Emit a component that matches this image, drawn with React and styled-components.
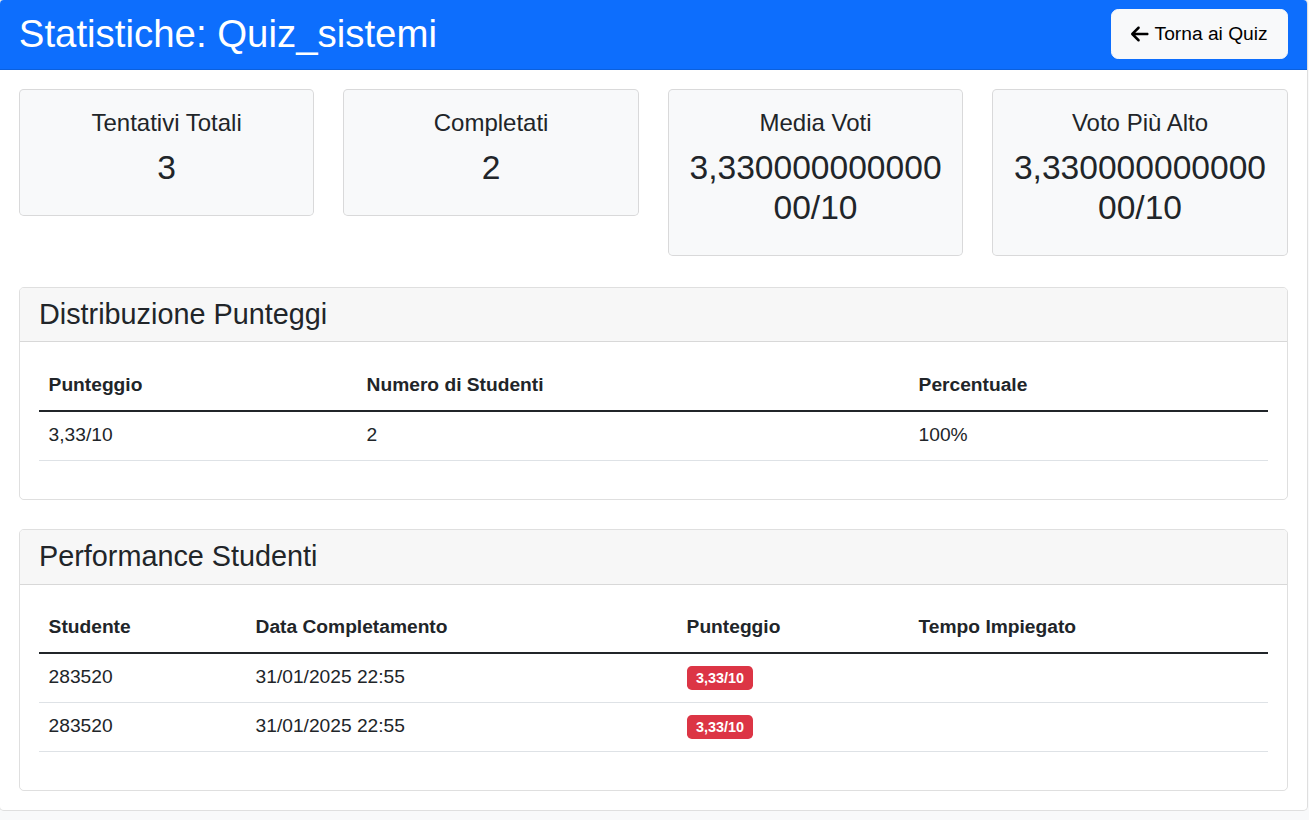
import React from "react";
import styled, { createGlobalStyle } from "styled-components";
import { FaArrowLeft } from "react-icons/fa6";

const Global = createGlobalStyle`
  html, body { margin: 0; padding: 0; }
  body {
    background: #f8f9fa;
    font-family: "Liberation Sans", Arial, sans-serif;
    color: #212529;
    font-size: 19.2px;
    line-height: 1.5;
    overflow-x: hidden;
  }
  * { box-sizing: border-box; }
`;

const Page = styled.div`
  width: calc(100% + 0.4px);
  margin-left: -1.4px;
  margin-top: -1.2px;
  background: #fff;
  border: 1.2px solid rgba(0, 0, 0, 0.125);
  border-radius: 4.8px;
  overflow: hidden;
`;

const TopBar = styled.div`
  background: #0d6efd;
  color: #fff;
  padding: 9.6px 19.2px;
  border-bottom: 1.2px solid rgba(0, 0, 0, 0.125);
  display: flex;
  align-items: center;
  justify-content: space-between;
`;

const Title = styled.h2`
  margin: 0;
  font-size: 38.4px;
  font-weight: 400;
  line-height: 1.2;
`;

const BackButton = styled.button`
  display: inline-flex;
  align-items: center;
  gap: 6px;
  background: #f8f9fa;
  color: #000;
  border: 1.2px solid #f8f9fa;
  border-radius: 7.2px;
  padding: 9.6px 19.2px;
  font-family: inherit;
  font-size: 19.2px;
  line-height: 28.8px;
  cursor: pointer;
  svg { width: 17.6px; height: 20px; }
`;

const Body = styled.div`
  padding: 19.2px;
`;

const StatsRow = styled.div`
  display: grid;
  grid-template-columns: repeat(4, minmax(0, 1fr));
  column-gap: 28.8px;
  align-items: start;
  margin-bottom: 30.4px;
`;

const StatCard = styled.div`
  background: #f8f9fa;
  border: 1.2px solid rgba(0, 0, 0, 0.125);
  border-radius: 4.8px;
  padding: 19.2px;
  text-align: center;
  overflow-wrap: break-word;
  word-wrap: break-word;
  min-width: 0;
`;

const StatLabel = styled.h5`
  margin: 0 0 9.6px;
  font-size: 24px;
  font-weight: 400;
  line-height: 28.8px;
`;

const StatValue = styled.h3`
  margin: 0 0 8.4px;
  font-size: 33.6px;
  font-weight: 400;
  line-height: 40px;
`;

const Panel = styled.section`
  border: 1.2px solid rgba(0, 0, 0, 0.125);
  border-radius: 4.8px;
  overflow: hidden;
  margin-bottom: ${(p) => (p.$last ? "0" : "28.8px")};
`;

const PanelHeader = styled.div`
  background: #f7f7f7;
  border-bottom: 1.2px solid rgba(0, 0, 0, 0.125);
  padding: 9.6px 19.2px;
`;

const PanelTitle = styled.h4`
  margin: 0;
  font-size: 28.8px;
  font-weight: 400;
  line-height: 34.56px;
`;

const PanelBody = styled.div`
  padding: 19.2px;
`;

const Table = styled.table`
  width: 100%;
  border-collapse: collapse;
  margin-bottom: 19.2px;
  table-layout: fixed;
`;

const Th = styled.th`
  text-align: left;
  font-weight: 700;
  padding: 9.6px;
  line-height: 28.8px;
  border-bottom: 2.4px solid #212529;
  width: ${(p) => p.$w || "auto"};
`;

const Td = styled.td`
  padding: 9.6px;
  line-height: 28.8px;
  border-bottom: 1.2px solid #dee2e6;
  vertical-align: middle;
`;

const Badge = styled.span`
  display: inline-block;
  background: #dc3545;
  color: #fff;
  font-weight: 700;
  font-size: 14.4px;
  line-height: 1;
  padding: 5.04px 9.36px;
  border-radius: 4.8px;
  vertical-align: middle;
`;

const stats = [
  { label: "Tentativi Totali", value: "3" },
  { label: "Completati", value: "2" },
  { label: "Media Voti", value: "3,33000000000000/10" },
  { label: "Voto Più Alto", value: "3,33000000000000/10" },
];

const students = [
  { id: "283520", date: "31/01/2025 22:55", score: "3,33/10" },
  { id: "283520", date: "31/01/2025 22:55", score: "3,33/10" },
];

export default function App() {
  return (
    <>
      <Global />
      <Page>
        <TopBar>
          <Title>Statistiche: Quiz_sistemi</Title>
          <BackButton>
            <FaArrowLeft />
            Torna ai Quiz
          </BackButton>
        </TopBar>
        <Body>
          <StatsRow>
            {stats.map((s) => (
              <StatCard key={s.label}>
                <StatLabel>{s.label}</StatLabel>
                <StatValue>{s.value}</StatValue>
              </StatCard>
            ))}
          </StatsRow>

          <Panel>
            <PanelHeader>
              <PanelTitle>Distribuzione Punteggi</PanelTitle>
            </PanelHeader>
            <PanelBody>
              <Table>
                <thead>
                  <tr>
                    <Th $w="318px">Punteggio</Th>
                    <Th $w="552px">Numero di Studenti</Th>
                    <Th>Percentuale</Th>
                  </tr>
                </thead>
                <tbody>
                  <tr>
                    <Td>3,33/10</Td>
                    <Td>2</Td>
                    <Td>100%</Td>
                  </tr>
                </tbody>
              </Table>
            </PanelBody>
          </Panel>

          <Panel $last>
            <PanelHeader>
              <PanelTitle>Performance Studenti</PanelTitle>
            </PanelHeader>
            <PanelBody>
              <Table>
                <thead>
                  <tr>
                    <Th $w="207px">Studente</Th>
                    <Th $w="431px">Data Completamento</Th>
                    <Th $w="232px">Punteggio</Th>
                    <Th>Tempo Impiegato</Th>
                  </tr>
                </thead>
                <tbody>
                  {students.map((s, i) => (
                    <tr key={i}>
                      <Td>{s.id}</Td>
                      <Td>{s.date}</Td>
                      <Td>
                        <Badge>{s.score}</Badge>
                      </Td>
                      <Td></Td>
                    </tr>
                  ))}
                </tbody>
              </Table>
            </PanelBody>
          </Panel>
        </Body>
      </Page>
    </>
  );
}
